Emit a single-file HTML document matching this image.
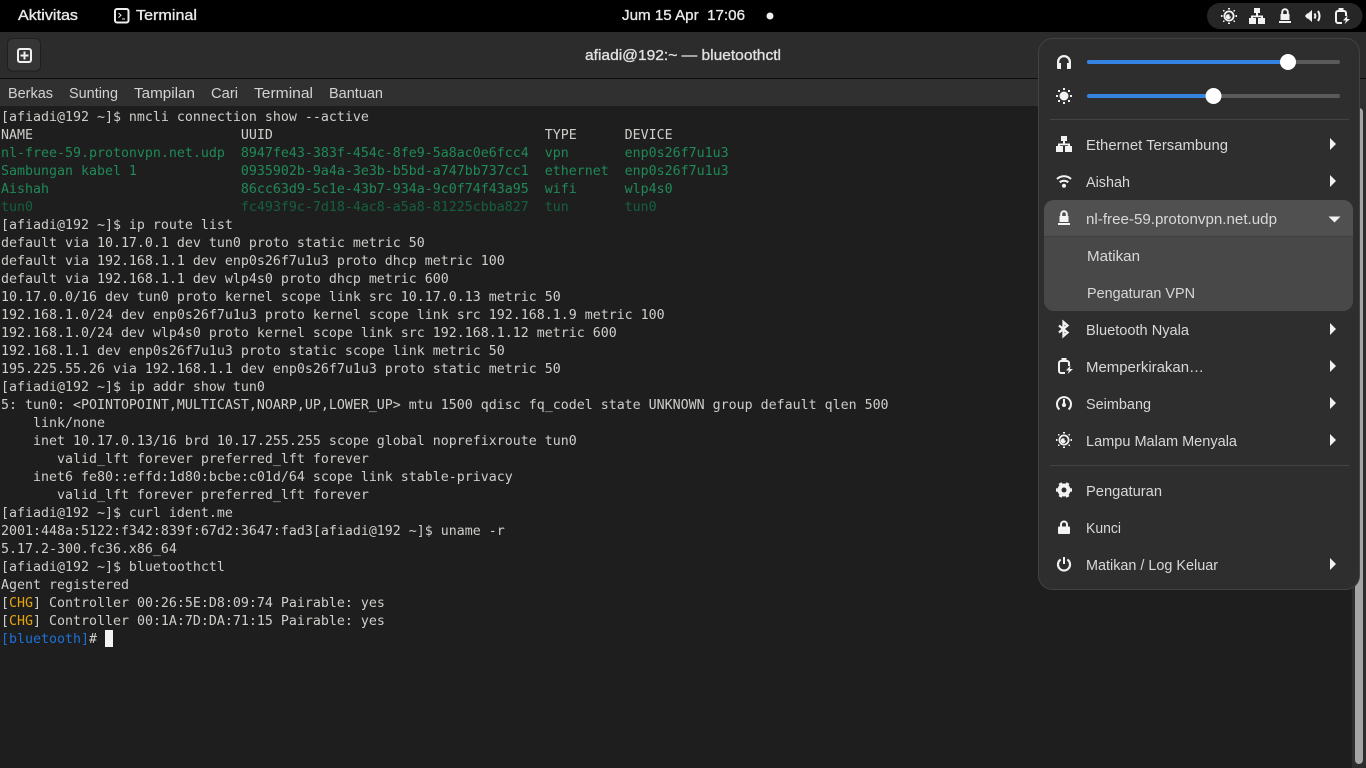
<!DOCTYPE html>
<html lang="id"><head><meta charset="utf-8"><title>Terminal</title>
<style>
html,body{margin:0;padding:0;background:#1e1e1e;width:1366px;height:768px;overflow:hidden}
svg{display:block;position:absolute;left:0;top:0}
text{font-family:"Liberation Sans",sans-serif;white-space:pre}
.t{font-family:"DejaVu Sans Mono",monospace;font-size:13.29px;fill:#cfcecb;transform:translateY(1px)}
.g{fill:#1f8a58}.d{fill:#14603e}.o{fill:#e5a50a}.b{fill:#1c71d8}
.top{font-size:15px;fill:#e8e8e8;stroke:#e8e8e8;stroke-width:.35}
.mb{font-size:15px;fill:#d2d2d2}
.m{font-size:15px;fill:#d8d8d8}
.ic{fill:#f2f2f2}
.st{fill:none;stroke:#f2f2f2;stroke-width:2}
</style></head><body>
<svg width="1366" height="768" viewBox="0 0 1366 768" xmlns="http://www.w3.org/2000/svg">
<defs>
<g id="net"><path class="ic" d="M5 0h6v5h-6zM0 10h7v6h-7zM9 10h7v6h-7z"/><path class="ic" d="M7 5h2v2.500h5v2.500h-2v-.8H4v.8H2V7.500h5z"/></g>
<g id="wifi"><path class="st" d="M1 6C5 2.400 11 2.400 15 6"/><path class="st" d="M3.700 9.300C6.200 7.200 9.800 7.200 12.300 9.300"/><circle class="ic" cx="8" cy="12.700" r="2"/></g>
<g id="vpn"><path class="ic" d="M0 13h12v2H0zM1.500 6h9v6h-9z"/><path fill="none" stroke="#f2f2f2" stroke-width="2" d="M3.200 6.500V4a2.800 2.800 0 0 1 5.600 0v2.500"/></g>
<g id="bt"><path fill="none" stroke="#f2f2f2" stroke-width="2.300" d="M1 4.500L9.500 11.500 5.500 15V1l4 3.500L1 11.500"/></g>
<g id="bat"><path class="st" d="M7 15H3a2 2 0 0 1-2-2V5a2 2 0 0 1 2-2h6a2 2 0 0 1 2 2v3"/><path class="ic" d="M3.500 0h5v2h-5zM12.500 7.500L8 12.500h3L9.500 16l5.500-5h-3z"/></g>
<g id="gauge"><path class="st" d="M3.500 13.500A7 7 0 1 1 12.500 13.500"/><path class="ic" d="M7 3h2v5H7z"/><circle class="ic" cx="8" cy="9" r="2"/></g>
<g id="night"><circle cx="8" cy="8" r="5.500" class="ic"/><circle cx="8" cy="8" r="3.700" fill="#2a2a2a"/><circle cx="7.300" cy="8.700" r="2.500" class="ic"/><path d="M8.500 6h2.500v2.500H8.500z" fill="#2a2a2a"/><path class="ic" d="M7 0h2v1.500H7zM7 14.500h2V16H7zM0 7h1.500v2H0zM14.500 7H16v2h-1.500zM2 2h1.500v1.500H2zM12.500 2H14v1.500h-1.500zM2 12.500h1.500V14H2zM12.500 12.500H14V14h-1.500z"/></g>
<g id="sun"><circle cx="8" cy="8" r="4.500" class="ic"/><path class="ic" d="M7 0h2v2H7zM7 14h2v2H7zM0 7h2v2H0zM14 7h2v2h-2zM2 2h2v2H2zM12 2h2v2h-2zM2 12h2v2H2zM12 12h2v2h-2z"/></g>
<g id="head"><path fill="none" stroke="#f2f2f2" stroke-width="2.200" d="M1.100 9V7a5.900 5.900 0 0 1 11.800 0v2"/><path class="ic" d="M1 8h3v6H1a1 1 0 0 1-1-1V9a1 1 0 0 1 1-1zM10 8h3a1 1 0 0 1 1 1v4a1 1 0 0 1-1 1h-3z"/></g>
<g id="gear"><circle cx="8" cy="8" r="4.500" fill="none" stroke="#f2f2f2" stroke-width="4"/><path class="ic" d="M0 6.300h16v3.400H0z"/><path class="ic" d="M0 6.300h16v3.400H0z" transform="rotate(60 8 8)"/><path class="ic" d="M0 6.300h16v3.400H0z" transform="rotate(120 8 8)"/><circle cx="8" cy="8" r="2.500" fill="#2e2e2e"/></g>
<g id="lock"><rect x="2" y="7.500" width="12" height="7.500" rx="1" class="ic"/><path class="st" d="M5 8V5.500a3 3 0 0 1 6 0V8"/></g>
<g id="pow"><path fill="none" stroke="#f2f2f2" stroke-width="2.200" d="M4.700 3.500a6 6 0 1 0 6.600 0"/><path class="ic" d="M7 1h2v7H7z"/></g>
<g id="sound"><path class="ic" d="M0 8L2 5.500H3L7 2v12L3 10.500H2z"/><path class="st" d="M9.500 5.500c1 1.500 1 3.500 0 5M13 3c2 3 2 7 0 10"/></g>
<path id="ar" class="ic" d="M0 0l6 6-6 6z"/>
</defs>

<rect width="1366" height="32" fill="#000"/>
<rect y="32" width="1366" height="46" fill="#2c2c2c"/>
<rect y="78" width="1366" height="1" fill="#0e0e0e"/>
<rect y="79" width="1366" height="27" fill="#303030"/>
<rect y="106" width="1366" height="662" fill="#1e1e1e"/>

<text class="top" x="18" y="20" textLength="60" lengthAdjust="spacingAndGlyphs">Aktivitas</text>
<rect x="115" y="9" width="13.500" height="13.500" rx="2" fill="none" stroke="#eee" stroke-width="2"/>
<path d="M118.500 13l2.500 2.300-2.500 2.300M122 19h3" fill="none" stroke="#eee" stroke-width="1"/>
<text class="top" x="136" y="20" textLength="61" lengthAdjust="spacingAndGlyphs">Terminal</text>
<text class="top" x="622" y="20" textLength="123" lengthAdjust="spacingAndGlyphs">Jum 15 Apr  17:06</text>
<circle cx="770" cy="16" r="3.500" fill="#f0f0f0"/>

<rect x="1207" y="3" width="155.500" height="26" rx="13" fill="#262626"/>
<use href="#night" x="1221" y="8"/>
<use href="#net" x="1249" y="8"/>
<use href="#vpn" x="1279" y="8"/>
<use href="#sound" x="1305" y="8"/>
<use href="#bat" x="1335" y="8"/>

<rect x="7.500" y="38.500" width="33" height="32.500" rx="5" fill="#363636" stroke="#1f1f1f"/>
<rect x="18" y="49" width="13" height="13" rx="2" fill="none" stroke="#f0f0f0" stroke-width="2"/>
<path d="M23.500 51.500h2v3h3v2h-3v3h-2v-3h-3v-2h3z" fill="#f0f0f0"/>
<text x="585" y="60" font-size="15" fill="#e0e0e0" stroke="#e0e0e0" stroke-width=".35" textLength="196" lengthAdjust="spacingAndGlyphs">afiadi@192:~ — bluetoothctl</text>

<text class="mb" x="8" y="98" textLength="45" lengthAdjust="spacingAndGlyphs">Berkas</text>
<text class="mb" x="69" y="98" textLength="49" lengthAdjust="spacingAndGlyphs">Sunting</text>
<text class="mb" x="134" y="98" textLength="61" lengthAdjust="spacingAndGlyphs">Tampilan</text>
<text class="mb" x="211" y="98" textLength="27" lengthAdjust="spacingAndGlyphs">Cari</text>
<text class="mb" x="254" y="98" textLength="59" lengthAdjust="spacingAndGlyphs">Terminal</text>
<text class="mb" x="329" y="98" textLength="54" lengthAdjust="spacingAndGlyphs">Bantuan</text>

<text class="t" x="1" y="120">[afiadi@192 ~]$ nmcli connection show --active</text>
<text class="t" x="1" y="138">NAME                          UUID                                  TYPE      DEVICE</text>
<text class="t g" x="1" y="156">nl-free-59.protonvpn.net.udp  8947fe43-383f-454c-8fe9-5a8ac0e6fcc4  vpn       enp0s26f7u1u3</text>
<text class="t g" x="1" y="174">Sambungan kabel 1             0935902b-9a4a-3e3b-b5bd-a747bb737cc1  ethernet  enp0s26f7u1u3</text>
<text class="t g" x="1" y="192">Aishah                        86cc63d9-5c1e-43b7-934a-9c0f74f43a95  wifi      wlp4s0</text>
<text class="t d" x="1" y="210">tun0                          fc493f9c-7d18-4ac8-a5a8-81225cbba827  tun       tun0</text>
<text class="t" x="1" y="228">[afiadi@192 ~]$ ip route list</text>
<text class="t" x="1" y="246">default via 10.17.0.1 dev tun0 proto static metric 50</text>
<text class="t" x="1" y="264">default via 192.168.1.1 dev enp0s26f7u1u3 proto dhcp metric 100</text>
<text class="t" x="1" y="282">default via 192.168.1.1 dev wlp4s0 proto dhcp metric 600</text>
<text class="t" x="1" y="300">10.17.0.0/16 dev tun0 proto kernel scope link src 10.17.0.13 metric 50</text>
<text class="t" x="1" y="318">192.168.1.0/24 dev enp0s26f7u1u3 proto kernel scope link src 192.168.1.9 metric 100</text>
<text class="t" x="1" y="336">192.168.1.0/24 dev wlp4s0 proto kernel scope link src 192.168.1.12 metric 600</text>
<text class="t" x="1" y="354">192.168.1.1 dev enp0s26f7u1u3 proto static scope link metric 50</text>
<text class="t" x="1" y="372">195.225.55.26 via 192.168.1.1 dev enp0s26f7u1u3 proto static metric 50</text>
<text class="t" x="1" y="390">[afiadi@192 ~]$ ip addr show tun0</text>
<text class="t" x="1" y="408">5: tun0: &lt;POINTOPOINT,MULTICAST,NOARP,UP,LOWER_UP&gt; mtu 1500 qdisc fq_codel state UNKNOWN group default qlen 500</text>
<text class="t" x="1" y="426">    link/none</text>
<text class="t" x="1" y="444">    inet 10.17.0.13/16 brd 10.17.255.255 scope global noprefixroute tun0</text>
<text class="t" x="1" y="462">       valid_lft forever preferred_lft forever</text>
<text class="t" x="1" y="480">    inet6 fe80::effd:1d80:bcbe:c01d/64 scope link stable-privacy</text>
<text class="t" x="1" y="498">       valid_lft forever preferred_lft forever</text>
<text class="t" x="1" y="516">[afiadi@192 ~]$ curl ident.me</text>
<text class="t" x="1" y="534">2001:448a:5122:f342:839f:67d2:3647:fad3[afiadi@192 ~]$ uname -r</text>
<text class="t" x="1" y="552">5.17.2-300.fc36.x86_64</text>
<text class="t" x="1" y="570">[afiadi@192 ~]$ bluetoothctl</text>
<text class="t" x="1" y="588">Agent registered</text>
<text class="t" x="1" y="606">[<tspan class="o">CHG</tspan>] Controller 00:26:5E:D8:09:74 Pairable: yes</text>
<text class="t" x="1" y="624">[<tspan class="o">CHG</tspan>] Controller 00:1A:7D:DA:71:15 Pairable: yes</text>
<text class="t" x="1" y="642"><tspan class="b">[bluetooth]</tspan># </text>
<rect x="105" y="630" width="8" height="17" fill="#f4f4f4"/>

<rect x="1352" y="106" width="14" height="662" fill="#2d2d2d"/>
<rect x="1355" y="108" width="8" height="656" rx="4" fill="#a5a5a5"/>

<rect x="1038.500" y="38.500" width="321" height="551" rx="14" fill="#2e2e2e" stroke="#424242"/>

<use href="#head" x="1057" y="55"/>
<rect x="1087" y="60" width="253" height="4" rx="2" fill="#5a5a5a"/>
<rect x="1087" y="60" width="201" height="4" rx="2" fill="#3584e4"/>
<circle cx="1288" cy="62" r="8" fill="#fff"/>
<use href="#sun" x="1056" y="88"/>
<rect x="1087" y="94" width="253" height="4" rx="2" fill="#5a5a5a"/>
<rect x="1087" y="94" width="127" height="4" rx="2" fill="#3584e4"/>
<circle cx="1213.500" cy="96" r="8" fill="#fff"/>
<rect x="1050" y="119" width="299" height="1" fill="#434343"/>

<use href="#net" x="1056" y="136"/>
<text class="m" x="1086" y="150" textLength="142" lengthAdjust="spacingAndGlyphs">Ethernet Tersambung</text>
<use href="#ar" x="1330" y="138"/>
<use href="#wifi" x="1056" y="173"/>
<text class="m" x="1086" y="187" textLength="44" lengthAdjust="spacingAndGlyphs">Aishah</text>
<use href="#ar" x="1330" y="175"/>

<rect x="1044" y="200" width="309" height="111" rx="10" fill="#484848"/>
<path d="M1044 236v-26a10 10 0 0 1 10-10h289a10 10 0 0 1 10 10v26z" fill="#505050"/>
<rect x="1044" y="236" width="309" height="1" fill="#404040"/>
<use href="#vpn" x="1058" y="210"/>
<text class="m" x="1086" y="224" textLength="191" lengthAdjust="spacingAndGlyphs">nl-free-59.protonvpn.net.udp</text>
<path class="ic" d="M1328.500 216.500h12l-6 6z"/>
<text class="m" x="1087" y="261" textLength="53" lengthAdjust="spacingAndGlyphs">Matikan</text>
<text class="m" x="1087" y="298" textLength="108" lengthAdjust="spacingAndGlyphs">Pengaturan VPN</text>

<use href="#bt" x="1058" y="321"/>
<text class="m" x="1086" y="335" textLength="103" lengthAdjust="spacingAndGlyphs">Bluetooth Nyala</text>
<use href="#ar" x="1330" y="323"/>
<use href="#bat" x="1058" y="358"/>
<text class="m" x="1086" y="372" textLength="118" lengthAdjust="spacingAndGlyphs">Memperkirakan…</text>
<use href="#ar" x="1330" y="360"/>
<use href="#gauge" x="1056" y="396"/>
<text class="m" x="1086" y="409" textLength="65" lengthAdjust="spacingAndGlyphs">Seimbang</text>
<use href="#ar" x="1330" y="397"/>
<use href="#night" x="1056" y="432"/>
<text class="m" x="1086" y="446" textLength="151" lengthAdjust="spacingAndGlyphs">Lampu Malam Menyala</text>
<use href="#ar" x="1330" y="434"/>
<rect x="1050" y="465" width="299" height="1" fill="#434343"/>

<use href="#gear" x="1056" y="482"/>
<text class="m" x="1086" y="496" textLength="76" lengthAdjust="spacingAndGlyphs">Pengaturan</text>
<use href="#lock" x="1056" y="519"/>
<text class="m" x="1086" y="533" textLength="35" lengthAdjust="spacingAndGlyphs">Kunci</text>
<use href="#pow" x="1056" y="556"/>
<text class="m" x="1086" y="570" textLength="132" lengthAdjust="spacingAndGlyphs">Matikan / Log Keluar</text>
<use href="#ar" x="1330" y="558"/>
</svg>
</body></html>
